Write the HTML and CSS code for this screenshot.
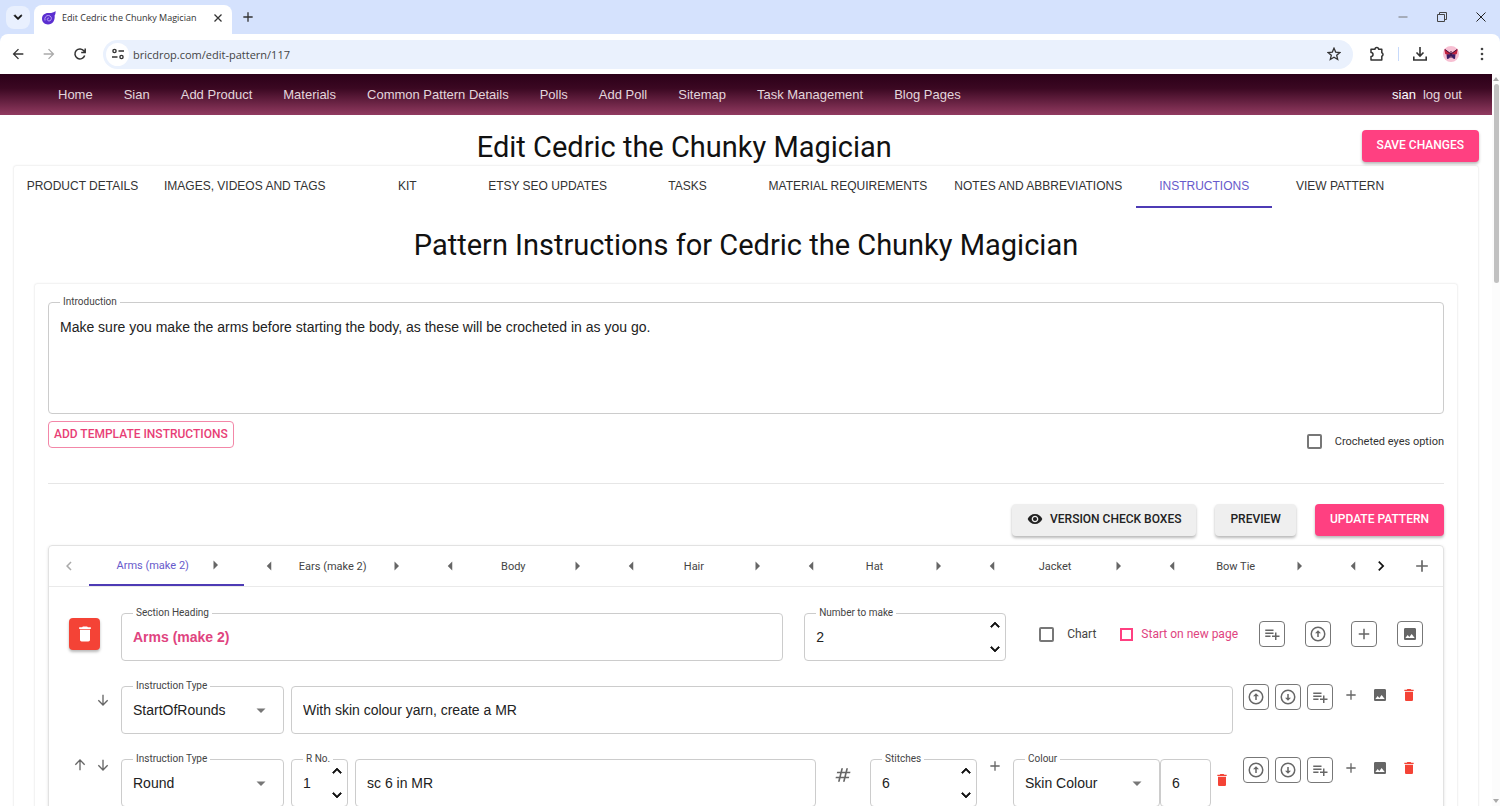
FILE: index.html
```html
<!DOCTYPE html>
<html lang="en">
<head>
<meta charset="utf-8">
<title>Edit Cedric the Chunky Magician</title>
<link rel="stylesheet" href="styles.css">
</head>
<body>
<svg class="sprite" aria-hidden="true">
  <symbol id="i-down" viewBox="0 0 24 24"><path d="M12 4v15M5 12.500l7 7 7-7" fill="none" stroke="currentColor" stroke-width="2"/></symbol>
  <symbol id="i-up" viewBox="0 0 24 24"><path d="M12 20V5M5 11.500l7-7 7 7" fill="none" stroke="currentColor" stroke-width="2"/></symbol>
  <symbol id="i-back" viewBox="0 0 24 24"><path d="M20 11H7.830l5.590-5.590L12 4l-8 8 8 8 1.410-1.410L7.830 13H20z" fill="currentColor"/></symbol>
  <symbol id="i-chev-up" viewBox="0 0 24 24"><path d="M12 8l-6 6 1.410 1.410L12 10.830l4.590 4.580L18 14z" fill="currentColor" stroke="currentColor"/></symbol>
  <symbol id="i-chev-down" viewBox="0 0 24 24"><path d="M16.590 8.590L12 13.170 7.410 8.590 6 10l6 6 6-6z" fill="currentColor" stroke="currentColor"/></symbol>
  <symbol id="i-chev-left" viewBox="0 0 24 24"><path d="M15.410 7.410L14 6l-6 6 6 6 1.410-1.410L10.830 12z" fill="currentColor"/></symbol>
  <symbol id="i-chev-right" viewBox="0 0 24 24"><path d="M10 6L8.590 7.410 13.170 12l-4.580 4.590L10 18l6-6z" fill="currentColor"/></symbol>
  <symbol id="i-caret-down" viewBox="0 0 24 24"><path d="M6 10l6 6 6-6z" fill="currentColor"/></symbol>
  <symbol id="i-caret-left" viewBox="0 0 24 24"><path d="M15 6l-6 6 6 6z" fill="currentColor"/></symbol>
  <symbol id="i-caret-right" viewBox="0 0 24 24"><path d="M10 18l6-6-6-6z" fill="currentColor"/></symbol>
  <symbol id="i-plus" viewBox="0 0 24 24"><path d="M19 13h-6v6h-2v-6H5v-2h6V5h2v6h6z" fill="currentColor"/></symbol>
  <symbol id="i-close" viewBox="0 0 24 24"><path d="M5 5l14 14M19 5L5 19" fill="none" stroke="currentColor" stroke-width="2.500"/></symbol>
  <symbol id="i-trash" viewBox="0 0 24 24"><path d="M6 19c0 1.100.9 2 2 2h8c1.100 0 2-.9 2-2V7H6zM19 4h-3.500l-1-1h-5l-1 1H5v2h14z" fill="currentColor"/></symbol>
  <symbol id="i-image" viewBox="0 0 24 24"><path d="M21 19V5c0-1.100-.9-2-2-2H5c-1.100 0-2 .9-2 2v14c0 1.100.9 2 2 2h14c1.100 0 2-.9 2-2zM8.500 13.500l2.500 3.010L14.500 12l4.500 6H5z" fill="currentColor"/></symbol>
  <symbol id="i-circle-up" viewBox="0 0 24 24"><circle cx="12" cy="12" r="9" fill="none" stroke="currentColor" stroke-width="2"/><path d="M11 16V11H8l4-4 4 4h-3v5z" fill="currentColor"/></symbol>
  <symbol id="i-circle-down" viewBox="0 0 24 24"><circle cx="12" cy="12" r="9" fill="none" stroke="currentColor" stroke-width="2"/><path d="M11 8v5H8l4 4 4-4h-3V8z" fill="currentColor"/></symbol>
  <symbol id="i-list-add" viewBox="0 0 24 24"><path d="M14 10H3v2h11zM14 6H3v2h11zM18 14v-4h-2v4h-4v2h4v4h2v-4h4v-2zM3 16h7v-2H3z" fill="currentColor"/></symbol>
  <symbol id="i-hash" viewBox="0 0 24 24"><path d="M20 10V8h-4V4h-2v4h-4V4H8v4H4v2h4v4H4v2h4v4h2v-4h4v4h2v-4h4v-2h-4v-4zm-6 4h-4v-4h4z" fill="currentColor" transform="translate(3 0) skewX(-14)"/></symbol>
  <symbol id="i-eye" viewBox="0 0 24 24"><path d="M12 4.500C7 4.500 2.730 7.610 1 12c1.730 4.390 6 7.500 11 7.500s9.270-3.110 11-7.500c-1.730-4.390-6-7.500-11-7.500zM12 17c-2.760 0-5-2.240-5-5s2.240-5 5-5 5 2.240 5 5-2.240 5-5 5zm0-8c-1.660 0-3 1.340-3 3s1.340 3 3 3 3-1.340 3-3-1.340-3-3-3z" fill="currentColor"/></symbol>
</svg>

<header class="browser">
  <div class="tabstrip">
    <button class="tab-search" aria-label="Search tabs"><svg class="s16"><use href="#i-chev-down"/></svg></button>
    <div class="browser-tab">
      <svg class="s14 favicon" viewBox="0 0 14 14"><path d="M13.500 0C13.800 2 13.300 3.500 12.600 4.500 13.300 9.500 10.500 13.500 6 13.500 2.500 13.500 0 11 0 7.800 0 4 3 1.800 6.500 2 9 2.200 11.500 1.800 13.500 0z" fill="#5b2fd0"/><path d="M3 9.500C2.200 6.500 4.200 4.300 6.500 4.500 9 4.700 10 7 9 8.800 8 10.500 5.500 10.300 5.300 8.500 5.200 7.500 6 6.900 7 7.200" fill="none" stroke="#b9a2f5" stroke-width="1"/></svg>
      <span class="browser-title">Edit Cedric the Chunky Magician</span>
      <button class="plain" aria-label="Close tab"><svg class="s12"><use href="#i-close"/></svg></button>
    </div>
    <button class="plain new-tab" aria-label="New tab"><svg class="s16"><use href="#i-plus"/></svg></button>
    <div class="window-buttons">
      <button class="plain" aria-label="Minimise"><svg class="s10" viewBox="0 0 10 10"><path d="M0.500 5h9" stroke="#777"/></svg></button>
      <button class="plain" aria-label="Restore"><svg class="s10" viewBox="0 0 10 10"><path d="M.5 2.500h7v7h-7zM2.500 2V.5h7v7H8" fill="none" stroke="#444"/></svg></button>
      <button class="plain" aria-label="Close"><svg class="s10" viewBox="0 0 10 10"><path d="M.5.5l9 9M9.500.5l-9 9" stroke="#222"/></svg></button>
    </div>
  </div>
  <div class="toolbar">
    <button class="plain" aria-label="Back"><svg class="s16"><use href="#i-back"/></svg></button>
    <button class="plain forward" aria-label="Forward"><svg class="s16 flip"><use href="#i-back"/></svg></button>
    <button class="plain" aria-label="Reload"><svg class="s16" viewBox="0 0 16 16"><path d="M12.700 9.500A5 5 0 1 1 12 5l1 1M13.200 2.500V6.500H9.200" fill="none" stroke="currentColor" stroke-width="1.500"/></svg></button>
    <div class="address">
      <button class="site-info" aria-label="Site information"><svg class="s14" viewBox="0 0 14 14"><g fill="none" stroke="#333" stroke-width="1.400"><circle cx="3.500" cy="4" r="1.600"/><path d="M7.500 4H13M1 10H6.500"/><circle cx="10.500" cy="10" r="1.600"/></g></svg></button>
      <input class="url" aria-label="Address" value="bricdrop.com/edit-pattern/117">
      <button class="plain" aria-label="Bookmark"><svg class="s14" viewBox="0 0 14 14"><path d="M7 1.200l1.700 3.900 4.200.4-3.200 2.800 1 4.200L7 10.300l-3.700 2.200 1-4.200L1.100 5.500l4.200-.4z" fill="none" stroke="currentColor" stroke-width="1.300"/></svg></button>
    </div>
    <div class="toolbar-end">
      <button class="plain" aria-label="Extensions"><svg class="s16" viewBox="0 0 16 16"><path d="M2 3.200H6a1.800 1.800 0 0 1 3.600 0H12.800V6.800a1.800 1.800 0 0 1 0 3.400V14H2V10.600a2 2 0 0 0 0-4z" fill="none" stroke="currentColor" stroke-width="1.500" stroke-linejoin="round"/></svg></button>
      <span class="separator"></span>
      <button class="plain" aria-label="Downloads"><svg class="s16" viewBox="0 0 16 16"><path d="M8 1v8.500M4.500 6.500L8 10l3.500-3.500M1.800 10.500V14H14.200V10.500" fill="none" stroke="currentColor" stroke-width="1.600"/></svg></button>
      <button class="plain" aria-label="Profile"><svg class="s16" viewBox="0 0 16 16"><circle cx="8" cy="8" r="8" fill="#f7bfd2"/><path d="M8 7.500L1.200 3 2.200 8 5 9z" fill="#c0213f"/><path d="M8 7.500L14.800 3 13.800 8 11 9z" fill="#c0213f"/><path d="M8 8L3.500 8.500 4 13 6 12.500 8 10l2 2.500 2 .5.500-4.500z" fill="#3b1b63"/><path d="M8 5v7M2 3.500L8 8l6-4.500" stroke="#401040" fill="none"/></svg></button>
      <button class="plain" aria-label="Menu"><svg class="s16" viewBox="0 0 16 16" fill="#444"><circle cx="8" cy="3" r="1.300"/><circle cx="8" cy="8" r="1.300"/><circle cx="8" cy="13" r="1.300"/></svg></button>
    </div>
  </div>
</header>

<div class="viewport">
  <div class="page">
    <nav class="site-nav">
      <a href="#">Home</a><a href="#">Sian</a><a href="#">Add Product</a><a href="#">Materials</a><a href="#">Common Pattern Details</a><a href="#">Polls</a><a href="#">Add Poll</a><a href="#">Sitemap</a><a href="#">Task Management</a><a href="#">Blog Pages</a>
      <div class="account"><a class="user" href="#">sian</a><a href="#">log out</a></div>
    </nav>

    <div class="title-row">
      <h1 class="heading">Edit Cedric the Chunky Magician</h1>
      <button class="btn pink">SAVE CHANGES</button>
    </div>

    <main class="card">
      <div class="main-tabs" role="tablist">
        <button class="main-tab" role="tab">PRODUCT DETAILS</button>
        <button class="main-tab" role="tab">IMAGES, VIDEOS AND TAGS</button>
        <button class="main-tab" role="tab">KIT</button>
        <button class="main-tab" role="tab">ETSY SEO UPDATES</button>
        <button class="main-tab" role="tab">TASKS</button>
        <button class="main-tab" role="tab">MATERIAL REQUIREMENTS</button>
        <button class="main-tab" role="tab">NOTES AND ABBREVIATIONS</button>
        <button class="main-tab active" role="tab" aria-selected="true">INSTRUCTIONS</button>
        <button class="main-tab" role="tab">VIEW PATTERN</button>
      </div>
      <h2 class="heading sub-heading">Pattern Instructions for Cedric the Chunky Magician</h2>

      <section class="card inner">
        <div class="field intro">
          <label for="intro">Introduction</label>
          <textarea id="intro">Make sure you make the arms before starting the body, as these will be crocheted in as you go.</textarea>
        </div>
        <div class="intro-actions">
          <button class="btn outline">ADD TEMPLATE INSTRUCTIONS</button>
          <label class="check eyes"><input type="checkbox"><span>Crocheted eyes option</span></label>
        </div>
        <hr class="rule">
        <div class="pattern-actions">
          <button class="btn grey"><svg class="s16"><use href="#i-eye"/></svg>VERSION CHECK BOXES</button>
          <button class="btn grey">PREVIEW</button>
          <button class="btn pink">UPDATE PATTERN</button>
        </div>

        <div class="panel">
          <div class="part-bar">
            <button class="plain scroll-prev" aria-label="Previous parts"><svg class="s18"><use href="#i-chev-left"/></svg></button>
            <div class="part-tabs">
              <div class="part first"><button class="part-name">Arms (make 2)</button><button class="plain" aria-label="Move right"><svg class="s18"><use href="#i-caret-right"/></svg></button></div>
              <div class="part"><button class="plain" aria-label="Move left"><svg class="s18"><use href="#i-caret-left"/></svg></button><button class="part-name">Ears (make 2)</button><button class="plain" aria-label="Move right"><svg class="s18"><use href="#i-caret-right"/></svg></button></div>
              <div class="part"><button class="plain" aria-label="Move left"><svg class="s18"><use href="#i-caret-left"/></svg></button><button class="part-name">Body</button><button class="plain" aria-label="Move right"><svg class="s18"><use href="#i-caret-right"/></svg></button></div>
              <div class="part"><button class="plain" aria-label="Move left"><svg class="s18"><use href="#i-caret-left"/></svg></button><button class="part-name">Hair</button><button class="plain" aria-label="Move right"><svg class="s18"><use href="#i-caret-right"/></svg></button></div>
              <div class="part"><button class="plain" aria-label="Move left"><svg class="s18"><use href="#i-caret-left"/></svg></button><button class="part-name">Hat</button><button class="plain" aria-label="Move right"><svg class="s18"><use href="#i-caret-right"/></svg></button></div>
              <div class="part"><button class="plain" aria-label="Move left"><svg class="s18"><use href="#i-caret-left"/></svg></button><button class="part-name">Jacket</button><button class="plain" aria-label="Move right"><svg class="s18"><use href="#i-caret-right"/></svg></button></div>
              <div class="part"><button class="plain" aria-label="Move left"><svg class="s18"><use href="#i-caret-left"/></svg></button><button class="part-name">Bow Tie</button><button class="plain" aria-label="Move right"><svg class="s18"><use href="#i-caret-right"/></svg></button></div>
              <div class="part clipped"><button class="plain" aria-label="Move left"><svg class="s18"><use href="#i-caret-left"/></svg></button></div>
            </div>
            <button class="plain scroll-next" aria-label="Next parts"><svg class="s20"><use href="#i-chev-right"/></svg></button>
            <button class="plain add-part" aria-label="Add part"><svg class="s20"><use href="#i-plus"/></svg></button>
          </div>

          <div class="row section-row">
            <button class="delete" aria-label="Delete section"><svg class="s20"><use href="#i-trash"/></svg></button>
            <div class="field grow"><label for="heading">Section Heading</label><input id="heading" class="accent" value="Arms (make 2)"></div>
            <div class="field number make"><label for="make">Number to make</label><input id="make" inputmode="numeric" value="2"><div class="steps"><button class="plain" aria-label="Increase"><svg class="s18"><use href="#i-chev-up"/></svg></button><button class="plain" aria-label="Decrease"><svg class="s18"><use href="#i-chev-down"/></svg></button></div></div>
            <label class="check chart"><input type="checkbox"><span>Chart</span></label>
            <label class="check new-page"><input type="checkbox"><span>Start on new page</span></label>
            <div class="section-tools">
              <button class="boxed" aria-label="Add row"><svg class="s18"><use href="#i-list-add"/></svg></button>
              <button class="boxed" aria-label="Insert above"><svg class="s18"><use href="#i-circle-up"/></svg></button>
              <button class="boxed" aria-label="Add"><svg class="s18"><use href="#i-plus"/></svg></button>
              <button class="boxed" aria-label="Add image"><svg class="s16"><use href="#i-image"/></svg></button>
            </div>
          </div>

          <div class="row">
            <div class="move"><button class="plain" aria-label="Move down"><svg class="s16"><use href="#i-down"/></svg></button></div>
            <div class="field type"><label for="type1">Instruction Type</label><select id="type1"><option>StartOfRounds</option></select><svg class="s18 caret"><use href="#i-caret-down"/></svg></div>
            <div class="field grow"><input aria-label="Instruction" value="With skin colour yarn, create a MR"></div>
            <div class="row-tools">
              <button class="boxed" aria-label="Insert above"><svg class="s18"><use href="#i-circle-up"/></svg></button>
              <button class="boxed" aria-label="Insert below"><svg class="s18"><use href="#i-circle-down"/></svg></button>
              <button class="boxed" aria-label="Add row"><svg class="s18"><use href="#i-list-add"/></svg></button>
              <button class="plain tool" aria-label="Add"><svg class="s16"><use href="#i-plus"/></svg></button>
              <button class="plain tool" aria-label="Add image"><svg class="s16"><use href="#i-image"/></svg></button>
              <button class="plain tool red" aria-label="Delete"><svg class="s16"><use href="#i-trash"/></svg></button>
            </div>
          </div>

          <div class="row">
            <div class="move both"><button class="plain" aria-label="Move up"><svg class="s16"><use href="#i-up"/></svg></button><button class="plain" aria-label="Move down"><svg class="s16"><use href="#i-down"/></svg></button></div>
            <div class="field type"><label for="type2">Instruction Type</label><select id="type2"><option>Round</option></select><svg class="s18 caret"><use href="#i-caret-down"/></svg></div>
            <div class="field number round-no"><label for="rno">R No.</label><input id="rno" inputmode="numeric" value="1"><div class="steps"><button class="plain" aria-label="Increase"><svg class="s18"><use href="#i-chev-up"/></svg></button><button class="plain" aria-label="Decrease"><svg class="s18"><use href="#i-chev-down"/></svg></button></div></div>
            <div class="field grow"><input aria-label="Instruction" value="sc 6 in MR"></div>
            <button class="plain hash" aria-label="Number"><svg class="s20"><use href="#i-hash"/></svg></button>
            <div class="field number stitches"><label for="st">Stitches</label><input id="st" inputmode="numeric" value="6"><div class="steps"><button class="plain" aria-label="Increase"><svg class="s18"><use href="#i-chev-up"/></svg></button><button class="plain" aria-label="Decrease"><svg class="s18"><use href="#i-chev-down"/></svg></button></div></div>
            <button class="plain add-colour" aria-label="Add colour"><svg class="s16"><use href="#i-plus"/></svg></button>
            <div class="colour-group">
              <div class="field colour"><label for="col">Colour</label><select id="col"><option>Skin Colour</option></select><svg class="s18 caret"><use href="#i-caret-down"/></svg></div>
              <div class="field count"><input aria-label="Colour stitches" value="6"></div>
              <button class="plain red remove-colour" aria-label="Remove colour"><svg class="s16"><use href="#i-trash"/></svg></button>
            </div>
            <div class="row-tools">
              <button class="boxed" aria-label="Insert above"><svg class="s18"><use href="#i-circle-up"/></svg></button>
              <button class="boxed" aria-label="Insert below"><svg class="s18"><use href="#i-circle-down"/></svg></button>
              <button class="boxed" aria-label="Add row"><svg class="s18"><use href="#i-list-add"/></svg></button>
              <button class="plain tool" aria-label="Add"><svg class="s16"><use href="#i-plus"/></svg></button>
              <button class="plain tool" aria-label="Add image"><svg class="s16"><use href="#i-image"/></svg></button>
              <button class="plain tool red" aria-label="Delete"><svg class="s16"><use href="#i-trash"/></svg></button>
            </div>
          </div>
        </div>
      </section>
    </main>
  </div>
  <div class="scrollbar" aria-hidden="true"><span class="arrow-up"></span><span class="thumb"></span><span class="arrow-down"></span></div>
</div>
</body>
</html>
```
FILE: styles.css
```css
* { box-sizing: border-box; }
body {
  margin: 0;
  height: 100vh;
  display: flex;
  flex-direction: column;
  overflow: hidden;
  background: #fff;
  color: #333;
  font-family: Roboto, "Liberation Sans", sans-serif;
  font-size: 12px;
}
button, input, select, textarea { font: inherit; color: inherit; }
button { cursor: pointer; }
svg { display: block; flex: none; }
.sprite { display: none; }
.s10 { width: 10px; height: 10px; }
.s12 { width: 12px; height: 12px; }
.s14 { width: 14px; height: 14px; }
.s16 { width: 16px; height: 16px; }
.s18 { width: 18px; height: 18px; }
.s20 { width: 20px; height: 20px; }
.flip { transform: scaleX(-1); }
.plain {
  display: inline-flex;
  align-items: center;
  justify-content: center;
  flex: none;
  padding: 0;
  border: 0;
  background: none;
}

/* Browser frame */
.browser { flex: none; color: #333; background: #d5e2fd; font-family: "Open Sans", sans-serif; }
.tabstrip { display: flex; align-items: center; height: 34px; padding-left: 6px; }
.tab-search {
  display: flex;
  align-items: center;
  justify-content: center;
  width: 24px;
  height: 23px;
  padding: 0;
  border: 0;
  border-radius: 8px;
  background: #e9f0fe;
  color: #111;
}
.browser-tab {
  display: flex;
  align-items: center;
  align-self: flex-end;
  width: 198px;
  height: 29px;
  margin-left: 4px;
  padding: 0 8px 4px;
  border-radius: 8px 8px 0 0;
  background: #fff;
}
.browser-title { flex: 1; margin-left: 6px; font-size: 9px; line-height: 16px; white-space: nowrap; }
.new-tab { margin-left: 8px; }
.window-buttons { display: flex; gap: 29px; margin-left: auto; padding-right: 14px; }
.toolbar {
  display: flex;
  align-items: center;
  height: 40px;
  padding: 0 10px;
  border-radius: 8px 8px 0 0;
  background: #fff;
}
.toolbar > .plain { margin-right: 15px; }
.forward { color: #aaa; }
.address {
  display: flex;
  align-items: center;
  flex: 1;
  height: 29px;
  padding: 0 12px 0 3px;
  border-radius: 16px;
  background: #eaf1fd;
}
.site-info {
  display: flex;
  align-items: center;
  justify-content: center;
  width: 23px;
  height: 23px;
  padding: 0;
  border: 0;
  border-radius: 50%;
  background: #fff;
}
.url { flex: 1; padding: 0; margin-left: 4px; border: 0; background: none; font-size: 11px; outline: 0; color: #444; }
.toolbar-end { display: flex; align-items: center; gap: 15px; padding-left: 16px; }
.separator { width: 1px; height: 14px; margin: 0 -2px; background: #c7dafb; }

/* Page */
.viewport { display: flex; flex: 1; min-height: 0; }
.page { flex: 1; min-width: 0; overflow: hidden; }
.scrollbar { display: flex; flex-direction: column; align-items: center; width: 8px; padding: 3px 0; background: #fcfcfc; }
.thumb { width: 5px; height: 199px; margin-top: 3px; border-radius: 3px; background: #c1c1c1; }
.arrow-up, .arrow-down { border: 3px solid transparent; }
.arrow-up { border-top: 0; border-bottom: 4px solid #aaa; }
.arrow-down { margin-top: auto; border-bottom: 0; border-top: 4px solid #aaa; }

.site-nav {
  display: flex;
  align-items: center;
  gap: 31px;
  height: 41px;
  padding: 0 30px 0 58px;
  background: linear-gradient(#2b0018, #3b0822 35%, #913a60);
  font-family: "Liberation Sans", Arial, sans-serif;
  font-size: 13px;
}
.site-nav a { color: #e3d6dc; text-decoration: none; white-space: nowrap; }
.account { display: flex; gap: 7px; margin-left: auto; }
.site-nav .user { color: #fff; }

.heading { margin: 0; color: #111; font-size: 29px; line-height: 34px; font-weight: 400; text-align: center; }
.title-row { display: flex; align-items: flex-start; gap: 6px; padding: 15px 13px 1px; }
.title-row .heading { flex: 1; }
.btn {
  display: inline-flex;
  align-items: center;
  justify-content: center;
  gap: 7px;
  flex: none;
  height: 32px;
  padding: 0 15px 2px;
  border: 0;
  border-radius: 4px;
  font-size: 12px;
  line-height: 16px;
  font-weight: 500;
  white-space: nowrap;
  box-shadow: 0 2px 3px rgba(0, 0, 0, .28);
}
.pink { background: #ff4081; color: #fff; }
.grey { background: #efefef; color: #222; }
.outline { height: 27px; padding: 0 5px 2px; border: 1px solid #f387a8; background: #fff; color: #e83e76; box-shadow: none; }

.card { margin: 0 13px; border: 1px solid #f3f3f3; border-bottom: 0; border-radius: 4px; box-shadow: 0 0 2px #f1f1f1; }
.main-tabs { display: grid; grid-template-columns: 137fr 188fr 137fr 144fr 136fr 185fr 196fr 136fr 136fr; margin-right: 70px; }
.main-tab {
  height: 42px;
  padding: 0;
  border: 0;
  border-bottom: 2px solid transparent;
  background: none;
  font-family: "Liberation Sans", Arial, sans-serif;
  font-size: 12px;
  white-space: nowrap;
}
.main-tab.active { border-color: #4d3bb5; color: #675acb; }
.sub-heading { padding-top: 20px; }
.inner { margin: 21px 20px 0; padding: 18px 13px 0; }

/* Form fields */
.field { position: relative; display: flex; align-items: center; flex: none; height: 48px; border: 1px solid #ccc; border-radius: 4px; color: #222; font-family: "Liberation Sans", Arial, sans-serif; font-size: 14px; }
.field label { position: absolute; top: -8px; left: 11px; padding: 0 3px; background: #fff; color: #444; font-family: Roboto, sans-serif; font-size: 10px; line-height: 14px; white-space: nowrap; }
.field input, .field select, .field textarea { width: 100%; min-width: 0; height: 100%; padding: 0 11px; border: 0; outline: 0; background: none; appearance: none; }
.field.intro { height: 112px; }
.field textarea { padding-top: 15px; line-height: 18px; resize: none; }
.field.grow { flex: 1; min-width: 0; }
.field .accent { color: #e0447f; font-weight: 700; }
.caret { position: absolute; right: 13px; color: #777; pointer-events: none; }
.steps { display: flex; flex-direction: column; justify-content: space-between; height: 100%; padding: 2px 1px 2px 0; color: #111; }
.intro-actions { display: flex; align-items: flex-start; justify-content: space-between; padding-top: 7px; }
.check { display: flex; align-items: center; gap: 13px; flex: none; white-space: nowrap; }
.check input { appearance: none; width: 15px; height: 15px; margin: 0; border: 2px solid #777; border-radius: 2px; background: #fff; }
.eyes { padding-top: 13px; font-size: 11px; }
.rule { width: 100%; margin: 34px 0 20px; border: 0; border-top: 1px solid #e6e6e6; }
.pattern-actions { display: flex; justify-content: flex-end; gap: 19px; margin-bottom: 9px; }

/* Pattern editor */
.panel { border: 1px solid #e2e2e2; border-radius: 4px; box-shadow: 0 1px 3px rgba(0, 0, 0, .12); }
.part-bar { display: flex; align-items: stretch; height: 41px; border-bottom: 1px solid #eaeaea; color: #666; }
.part-tabs { display: flex; flex: 1; min-width: 0; overflow: hidden; }
.scroll-prev { width: 40px; color: #aaa; }
.scroll-next { width: 40px; color: #111; }
.add-part { width: 42px; }
.part { display: flex; align-items: center; flex: 181 0 0; padding: 0 20px 0 16px; }
.part.first { flex-grow: 157; padding-left: 10px; border-bottom: 2px solid #4d3bb5; }
.part.clipped { flex: 0 0 33px; padding-right: 0; overflow: hidden; }
.part-name { flex: 1; padding: 0; border: 0; background: none; color: #444; font-size: 11px; }
.first .part-name { color: #675acb; }
.row { display: flex; align-items: flex-start; gap: 7px; padding: 0 23px 25px 17px; color: #666; }
.section-row { gap: 21px; padding: 26px 20px 25px; }
.delete { display: flex; align-items: center; justify-content: center; flex: none; width: 31px; height: 32px; margin-top: 5px; padding: 0; border: 0; border-radius: 4px; background: #f44336; color: #fff; box-shadow: 0 2px 3px rgba(0, 0, 0, .28); }
.make { width: 202px; }
.chart, .new-page, .section-tools { height: 42px; }
.chart { margin-left: 12px; color: #444; }
.new-page { gap: 8px; margin-left: 3px; color: #e0447f; }
.new-page input { width: 13px; height: 13px; border-color: #ff4081; border-radius: 0; }
.section-tools { display: flex; align-items: center; gap: 20px; }
.boxed { display: flex; align-items: center; justify-content: center; flex: none; width: 26px; height: 26px; padding: 0; border: 1px solid #777; border-radius: 4px; background: #fff; color: #666; }
.move { display: flex; justify-content: flex-end; width: 48px; gap: 7px; margin-top: 6px; padding-right: 3px; }
.move.both { margin-top: -2px; }
.type { width: 163px; }
.row-tools { display: flex; gap: 6px; margin: -2px 0 0 3px; }
.tool { width: 23px; height: 22px; }
.red { color: #f44336; }
.round-no { width: 57px; }
.hash { width: 40px; height: 32px; }
.stitches { width: 107px; }
.add-colour { width: 22px; height: 14px; }
.colour-group { display: flex; }
.colour { width: 147px; }
.count { width: 51px; }
.remove-colour { width: 22px; height: 42px; }
```
